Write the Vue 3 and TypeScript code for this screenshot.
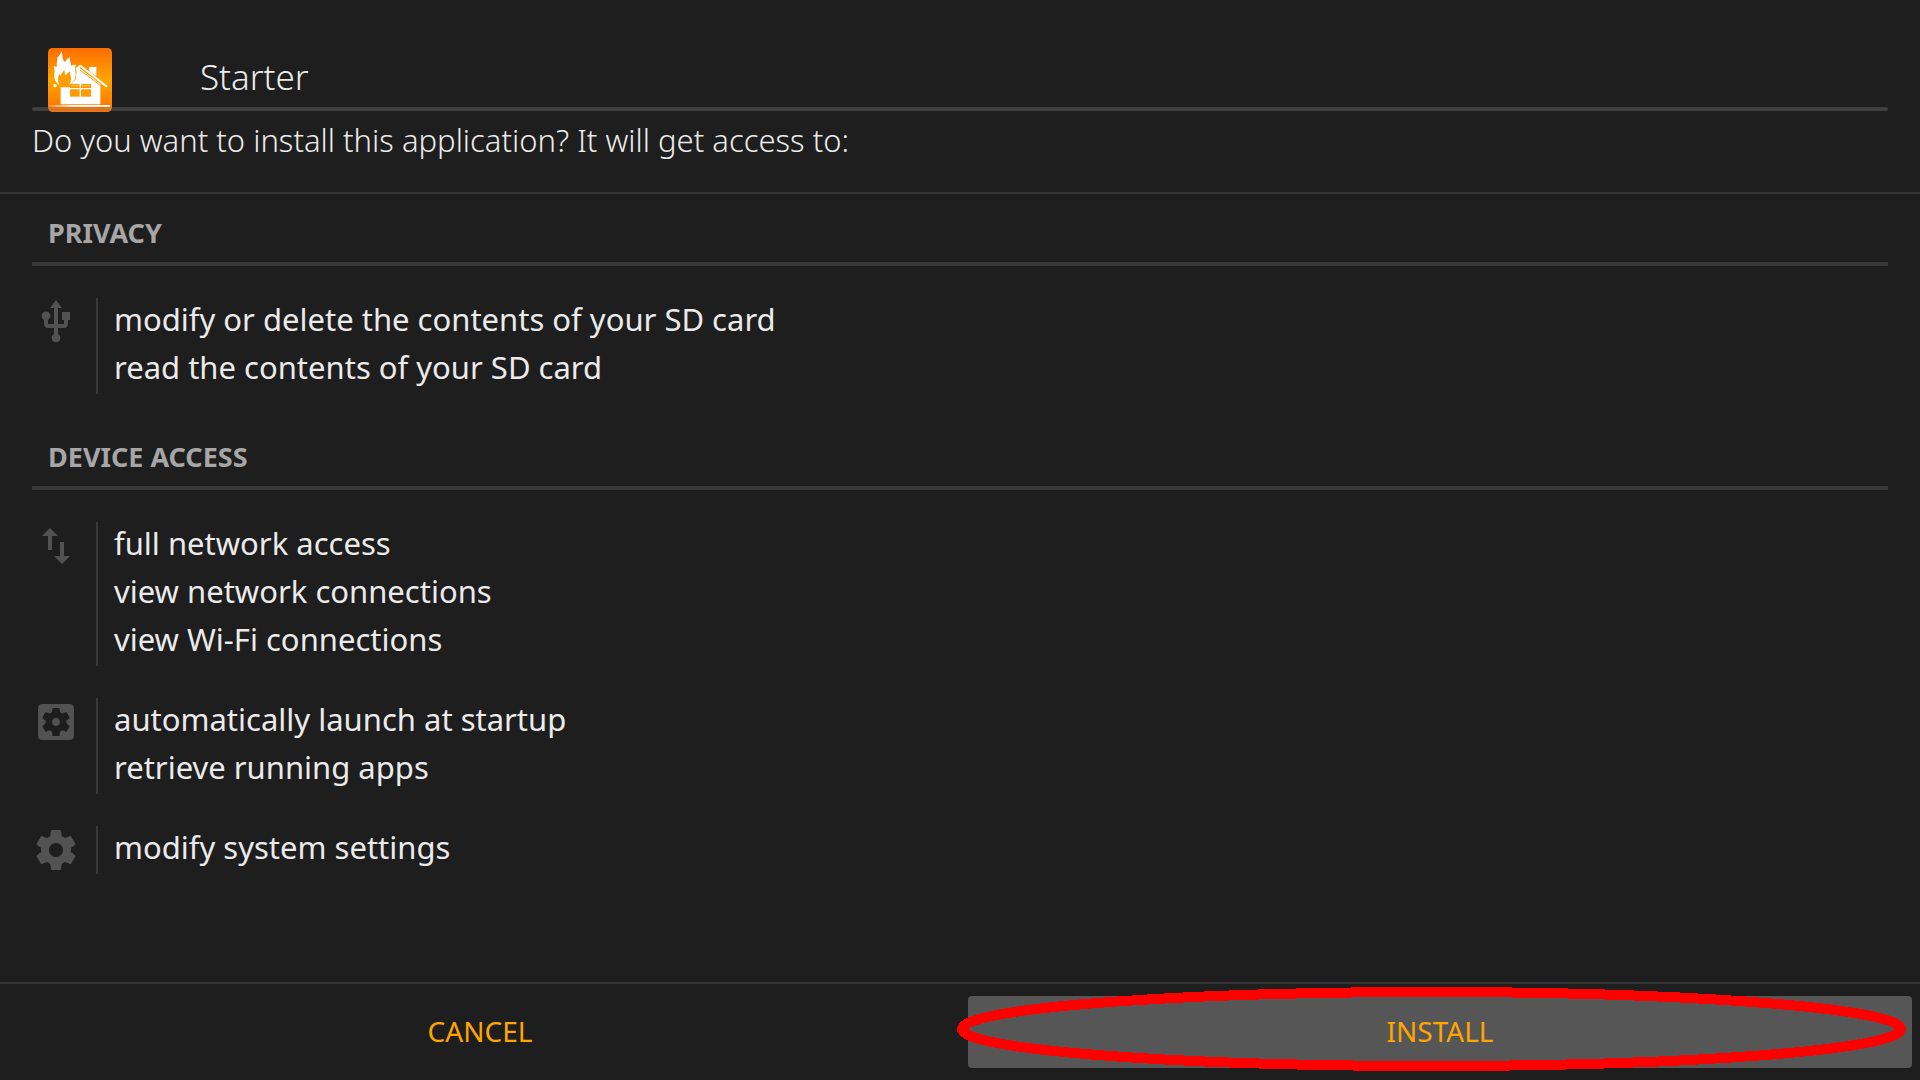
<script setup lang="ts">
type IconName = 'usb' | 'network' | 'apps' | 'settings'

interface PermissionGroup {
  icon: IconName
  permissions: string[]
}

interface Section {
  title: string
  groups: PermissionGroup[]
}

const sections: Section[] = [
  {
    title: 'PRIVACY',
    groups: [
      {
        icon: 'usb',
        permissions: [
          'modify or delete the contents of your SD card',
          'read the contents of your SD card',
        ],
      },
    ],
  },
  {
    title: 'DEVICE ACCESS',
    groups: [
      {
        icon: 'network',
        permissions: ['full network access', 'view network connections', 'view Wi-Fi connections'],
      },
      { icon: 'apps', permissions: ['automatically launch at startup', 'retrieve running apps'] },
      { icon: 'settings', permissions: ['modify system settings'] },
    ],
  },
]

const iconPaths: Record<IconName, string> = {
  usb: 'M15 7v4h1v2h-3V5h2l-3-4-3 4h2v8H8v-2.07c.7-.37 1.2-1.08 1.2-1.93 0-1.21-.99-2.2-2.2-2.2-1.21 0-2.2.99-2.2 2.2 0 .85.5 1.56 1.2 1.93V13c0 1.11.89 2 2 2h3v3.05c-.71.37-1.2 1.1-1.2 1.95 0 1.22.99 2.2 2.2 2.2 1.21 0 2.2-.98 2.2-2.2 0-.85-.49-1.58-1.2-1.95V15h3c1.11 0 2-.89 2-2v-2h1V7h-4z',
  network: 'M16 17.01V10h-2v7.01h-3L15 21l4-3.99h-3zM9 3L5 6.99h3V14h2V6.99h3L9 3z',
  apps: 'M12 10c-1.1 0-2 .9-2 2s.9 2 2 2 2-.9 2-2-.9-2-2-2zm7-7H5c-1.11 0-2 .9-2 2v14c0 1.1.89 2 2 2h14c1.11 0 2-.9 2-2V5c0-1.1-.89-2-2-2zm-1.75 9c0 .23-.02.46-.05.68l1.48 1.16c.13.11.17.3.08.45l-1.4 2.42c-.09.15-.27.21-.43.15l-1.74-.7c-.36.28-.76.51-1.18.69l-.26 1.85c-.03.17-.18.3-.35.3h-2.8c-.17 0-.32-.13-.35-.29l-.26-1.85c-.43-.18-.82-.41-1.18-.69l-1.74.7c-.16.06-.34 0-.43-.15l-1.4-2.42c-.09-.15-.05-.34.08-.45l1.48-1.16c-.03-.23-.05-.46-.05-.69 0-.23.02-.46.05-.68l-1.48-1.16c-.13-.11-.17-.3-.08-.45l1.4-2.42c.09-.15.27-.21.43-.15l1.74.7c.36-.28.76-.51 1.18-.69l.26-1.85c.03-.17.18-.3.35-.3h2.8c.17 0 .32.13.35.29l.26 1.85c.43.18.82.41 1.18.69l1.74-.7c.16-.06.34 0 .43.15l1.4 2.42c.09.15.05.34-.08.45l-1.48 1.16c.03.23.05.46.05.69z',
  settings:
    'M19.43 12.98c.04-.32.07-.64.07-.98s-.03-.66-.07-.98l2.11-1.65c.19-.15.24-.42.12-.64l-2-3.46c-.12-.22-.39-.3-.61-.22l-2.49 1c-.52-.4-1.08-.73-1.69-.98l-.38-2.65C14.46 2.18 14.25 2 14 2h-4c-.25 0-.46.18-.49.42l-.38 2.65c-.61.25-1.17.59-1.69.98l-2.49-1c-.23-.09-.49 0-.61.22l-2 3.46c-.13.22-.07.49.12.64l2.11 1.65c-.04.32-.07.65-.07.98s.03.66.07.98l-2.11 1.65c-.19.15-.24.42-.12.64l2 3.46c.12.22.39.3.61.22l2.49-1c.52.4 1.08.73 1.69.98l.38 2.65c.03.24.24.42.49.42h4c.25 0 .46-.18.49-.42l.38-2.65c.61-.25 1.17-.59 1.69-.98l2.49 1c.23.09.49 0 .61-.22l2-3.46c.12-.22.07-.49-.12-.64l-2.11-1.65zM12 15.5c-1.93 0-3.5-1.57-3.5-3.5s1.57-3.5 3.5-3.5 3.5 1.57 3.5 3.5-1.57 3.5-3.5 3.5z',
}
</script>

<template>
  <div class="installer">
    <header class="app-header">
      <svg class="app-logo" viewBox="0 0 192 192" aria-hidden="true">
        <defs>
          <linearGradient id="logo-fill" x1="0" y1="0" x2="0" y2="192" gradientUnits="userSpaceOnUse">
            <stop offset="0" stop-color="#ff6c00" />
            <stop offset="0.5" stop-color="#ffa600" />
            <stop offset="1" stop-color="#ff7000" />
          </linearGradient>
          <linearGradient id="ground-fill" x1="0" y1="0" x2="1" y2="0">
            <stop offset="0" stop-color="#fff" stop-opacity="0.2" />
            <stop offset="0.4" stop-color="#fff" />
            <stop offset="1" stop-color="#fff" />
          </linearGradient>
        </defs>
        <rect width="192" height="192" rx="14" fill="url(#logo-fill)" />
        <path d="M124 57h21v28l-21-15z" fill="#fff" />
        <path d="M38 118H64L84 92L86 64L92 58L157 108V169H38z" fill="#fff" />
        <path d="M96 66L158 113" stroke="#ffa030" stroke-width="3" />
        <path d="M86 62L97 53L175 115" fill="none" stroke="#fff" stroke-width="6" stroke-linecap="round" stroke-linejoin="round" />
        <path
          d="M41 9C44 22 42 28 47 38C50 43 52 42 54 38C57 32 60 30 66 26C63 36 70 42 69 54C72 50 76 50 84 50C77 62 88 76 80 94C76 104 69 110 60 112H37C27 108 20 98 19 86C18 74 23 68 16 54L27 57C24 44 30 36 28 28C34 24 38 18 41 9z"
          fill="#fff"
        />
        <path
          d="M37 114C28 102 30 88 33 78L38 84C40 76 44 72 49 66C50 72 50 76 53 82C57 78 60 73 66 70C64 80 72 88 68 100C67 106 65 110 62 114L56 117H42z"
          fill="#ff9c00"
        />
        <circle cx="21" cy="113" r="5" fill="#fff" />
        <rect x="66" y="108" width="63" height="38" fill="#ff9a00" />
        <path d="M97 108V146M66 122H129" stroke="#fff" stroke-width="4" />
        <path d="M70 113H125" stroke="#fff" stroke-opacity="0.45" stroke-width="3" />
        <rect x="4" y="171" width="183" height="5" rx="2" fill="url(#ground-fill)" />
      </svg>
      <h1 class="app-name">Starter</h1>
    </header>
    <p class="question">Do you want to install this application? It will get access to:</p>

    <main class="permissions">
      <section v-for="section in sections" :key="section.title" class="section">
        <h2 class="section-title">{{ section.title }}</h2>
        <div v-for="group in section.groups" :key="group.icon" class="group">
          <svg class="group-icon" viewBox="0 0 24 24" aria-hidden="true">
            <path :d="iconPaths[group.icon]" />
          </svg>
          <ul class="group-list">
            <li v-for="permission in group.permissions" :key="permission">{{ permission }}</li>
          </ul>
        </div>
      </section>
    </main>

    <footer class="actions">
      <button type="button" class="action">CANCEL</button>
      <button type="button" class="action focused">
        INSTALL
        <svg class="marker" aria-hidden="true"><ellipse cx="50%" cy="50%" /></svg>
      </button>
    </footer>
  </div>
</template>

<style>
body {
  margin: 0;
  background: #1e1e1e;
}
</style>

<style scoped>
.installer {
  display: flex;
  flex-direction: column;
  min-height: 100vh;
  background: #1e1e1e;
  color: #ebebeb;
  font-family: 'Noto Sans', 'Open Sans', sans-serif;
}

.app-header {
  position: relative;
  display: flex;
  align-items: center;
  gap: 88px;
  margin: 48px 32px 0;
  padding-left: 16px;
}

.app-header::after {
  content: '';
  position: absolute;
  right: 0;
  bottom: 1px;
  left: 0;
  height: 4px;
  border-radius: 2px;
  background: rgba(128, 128, 128, 0.33);
}

.app-logo {
  width: 64px;
  height: 64px;
}

.app-name {
  margin: 0;
  padding-bottom: 6px;
  font-size: 35px;
  font-weight: 300;
  line-height: 56px;
}

.question {
  margin: 0;
  padding: 4px 32px 28px;
  border-bottom: 2px solid #353535;
  font-size: 31px;
  font-weight: 300;
  line-height: 48px;
}

.permissions {
  flex: 1;
  padding: 8px 32px 32px;
}

.section {
  padding-bottom: 32px;
}

.section-title {
  margin: 0;
  padding: 2px 0 0 16px;
  border-bottom: 4px solid #393939;
  color: #a6a6a6;
  font-size: 27px;
  font-weight: 700;
  line-height: 58px;
}

.group {
  display: flex;
  gap: 16px;
  margin-top: 32px;
}

.group-icon {
  width: 48px;
  height: 48px;
  fill: #525252;
}

.group-list {
  margin: 0;
  padding: 0 0 0 16px;
  border-left: 2px solid #393939;
  font-size: 31px;
  line-height: 42px;
  list-style: none;
}

.group-list li {
  padding-bottom: 6px;
}

.actions {
  display: flex;
  gap: 16px;
  padding: 12px 8px;
  border-top: 2px solid #353535;
}

.action {
  position: relative;
  flex: 1;
  height: 72px;
  padding: 0 0 2px;
  border: 0;
  border-radius: 4px;
  background: transparent;
  color: #ffa500;
  font-family: inherit;
  font-size: 28px;
}

.focused {
  background: #565656;
}

.marker {
  position: absolute;
  top: -9px;
  left: -11px;
  width: calc(100% + 5px);
  height: calc(100% + 12px);
  overflow: visible;
  pointer-events: none;
}

.marker ellipse {
  rx: calc(50% - 5px);
  ry: calc(50% - 5px);
  fill: none;
  stroke: #ff0000;
  stroke-width: 10px;
  shape-rendering: crispEdges;
}
</style>
